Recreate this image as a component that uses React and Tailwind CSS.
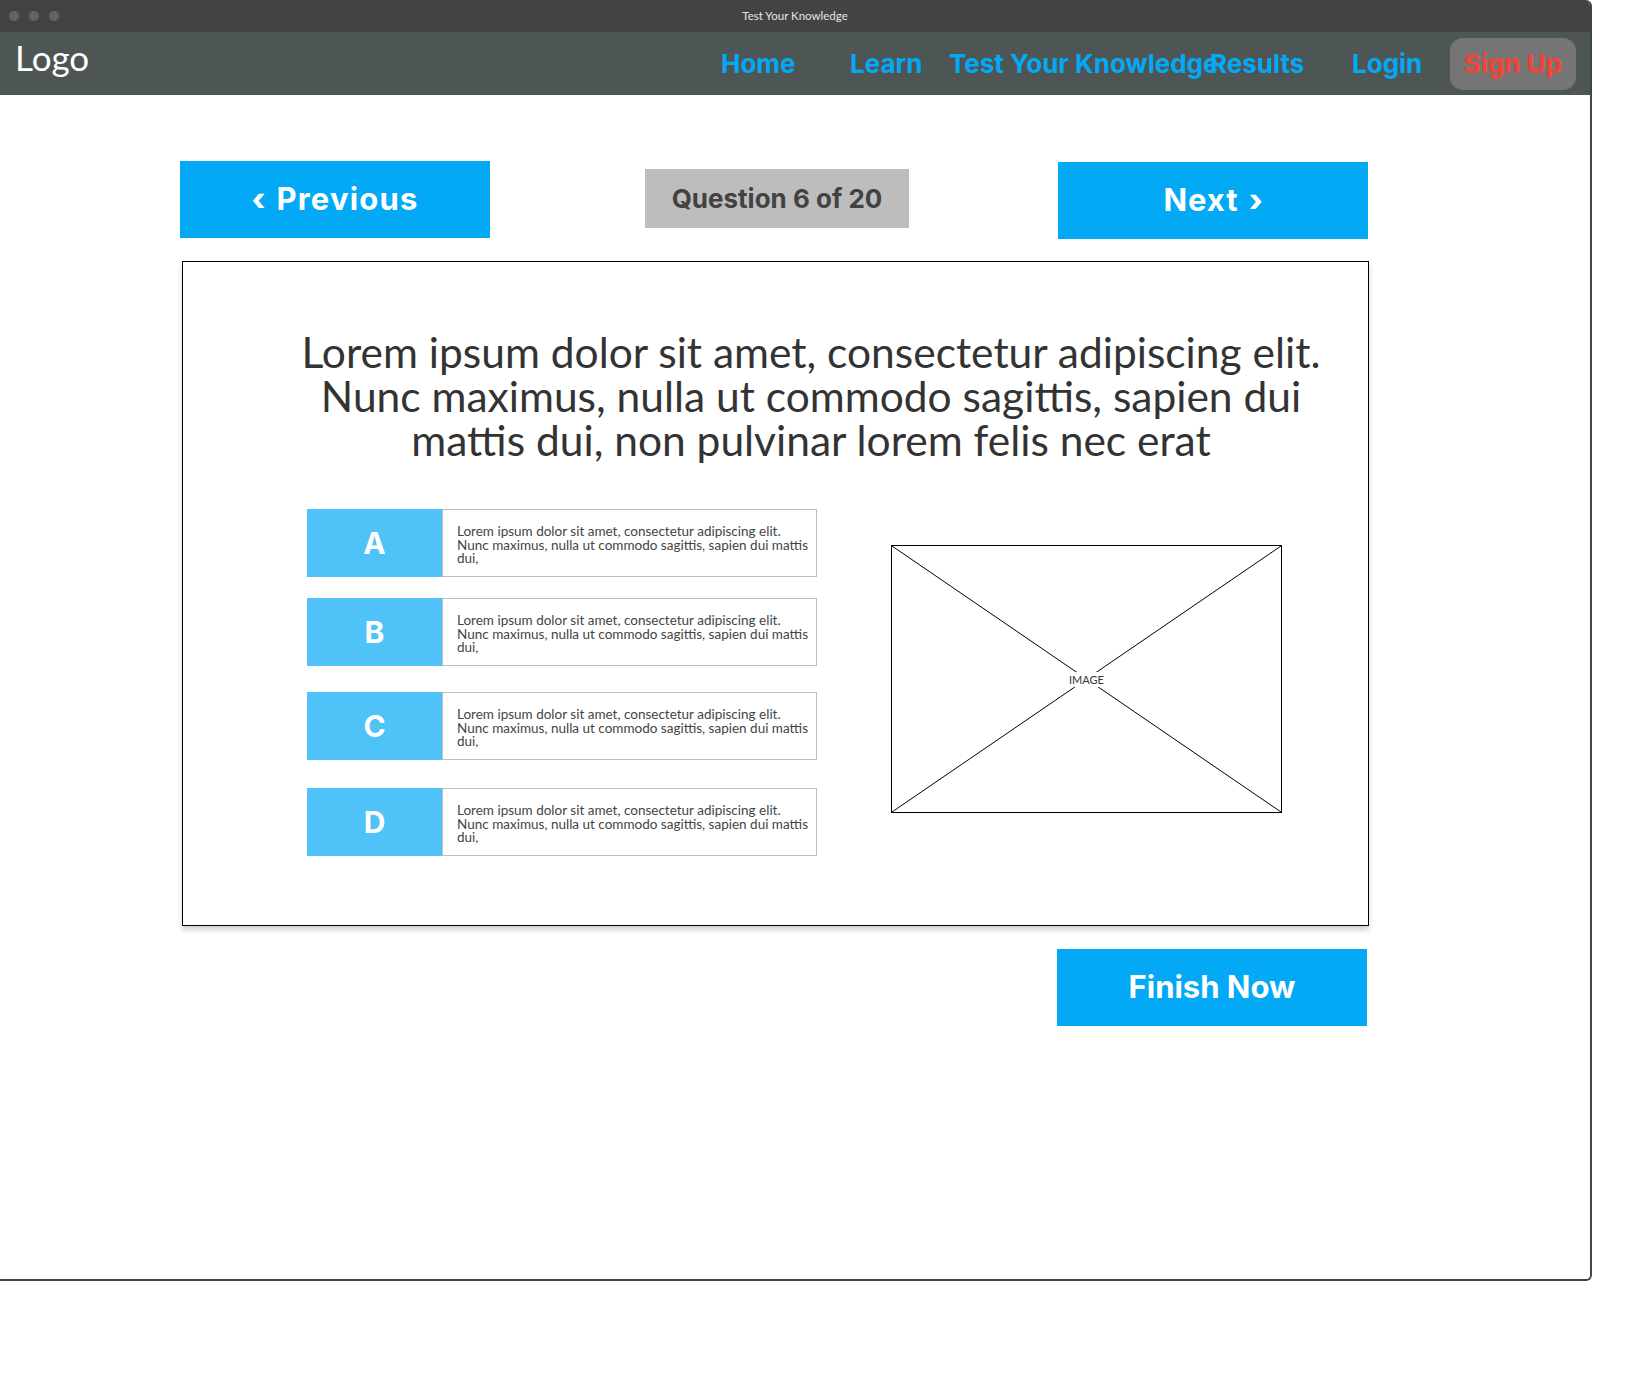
const navItems = [
  { label: 'Home', box: 'w-[129px]' },
  { label: 'Learn', box: 'w-[99px]' },
  { label: 'Test Your Knowledge', box: 'w-[261px]' },
  { label: 'Results', box: 'w-[142px]' },
  { label: 'Login', box: 'w-[98px]' },
];

const answers = [
  { letter: 'A', gap: 'mt-0' },
  { letter: 'B', gap: 'mt-[21px]' },
  { letter: 'C', gap: 'mt-[26px]' },
  { letter: 'D', gap: 'mt-[28px]' },
];

const TitleBar = () => (
  <div className="grid h-[32px] grid-cols-[1fr_auto_1fr] items-center bg-[#434343] pb-[1px]">
    <div className="flex gap-[10px] pl-[9px] pt-[1px]">
      <span className="h-[10px] w-[10px] rounded-full bg-[#646464]" />
      <span className="h-[10px] w-[10px] rounded-full bg-[#646464]" />
      <span className="h-[10px] w-[10px] rounded-full bg-[#646464]" />
    </div>
    <p className="text-[11.5px] text-[#e6e6e6]">Test Your Knowledge</p>
    <div />
  </div>
);

const NavBar = () => (
  <nav className="flex h-[63px] items-center bg-[#4d5654] pl-[15px] pr-[14px]">
    <span className="self-start mt-[8px] text-[35px] leading-none text-white">Logo</span>
    <div className="ml-auto flex items-center font-['Inter',sans-serif] text-[26px] font-bold leading-none">
      {navItems.map((item) => (
        <a key={item.label} className={`${item.box} whitespace-nowrap text-[#03a9f4]`}>
          {item.label}
        </a>
      ))}
      <a className="flex h-[52px] w-[126px] items-center justify-center rounded-[13px] bg-[#757575] text-[#f44336]">
        Sign Up
      </a>
    </div>
  </nav>
);

const AnswerRow = ({ letter, gap }) => (
  <div className={`flex h-[68px] ${gap}`}>
    <div className="flex w-[135px] items-center justify-center bg-[#4fc3f7] font-['Inter',sans-serif] text-[30px] font-bold text-white">
      {letter}
    </div>
    <div className="flex-1 border border-[#bdbdbd] bg-white pl-[14px] pt-[15px] text-[13.5px] leading-[13.6px] text-[#444]">
      Lorem ipsum dolor sit amet, consectetur adipiscing elit.
      <br />
      Nunc maximus, nulla ut commodo sagittis, sapien dui mattis
      <br />
      dui,
    </div>
  </div>
);

const ImagePlaceholder = () => (
  <div className="relative ml-[74px] mt-[36px] flex h-[268px] w-[391px] items-center justify-center border border-black">
    <svg className="absolute inset-0 h-full w-full" viewBox="0 0 100 100" preserveAspectRatio="none">
      <line x1="0" y1="0" x2="100" y2="100" stroke="#000" strokeWidth="1" vectorEffect="non-scaling-stroke" />
      <line x1="100" y1="0" x2="0" y2="100" stroke="#000" strokeWidth="1" vectorEffect="non-scaling-stroke" />
    </svg>
    <span className="relative bg-white px-[3px] py-[2px] text-[11px] leading-none text-[#333]">IMAGE</span>
  </div>
);

const BigButton = ({ children, className }) => (
  <button
    className={`flex h-[77px] w-[310px] items-center justify-center bg-[#03a9f4] font-['Inter',sans-serif] text-[31px] font-bold text-white ${className}`}
  >
    {children}
  </button>
);

export default function App() {
  return (
    <div className="min-h-[1389px] w-[1639px] bg-white font-['Lato',sans-serif]">
      <div className="flex h-[1281px] w-[1592px] flex-col overflow-hidden rounded-tr-[6px] rounded-br-[6px] border-r-2 border-b-2 border-[#444]">
        <TitleBar />
        <NavBar />

        <main className="ml-[180px] w-[1189px] pt-[66px]">
          <div className="flex items-start">
            <BigButton>
              <span className="font-extrabold">‹</span>
              <span className="ml-[11px] tracking-[1.2px]">Previous</span>
            </BigButton>
            <div className="ml-[155px] mt-[8px] flex h-[59px] w-[264px] items-center justify-center bg-[#bdbdbd] font-['Inter',sans-serif] text-[26px] font-bold text-[#424242]">
              Question 6 of 20
            </div>
            <BigButton className="ml-[149px] mt-[1px]">
              <span className="tracking-[1px]">Next</span>
              <span className="ml-[10px] font-extrabold">›</span>
            </BigButton>
          </div>

          <section className="ml-[2px] mt-[22px] h-[665px] w-[1187px] border border-black bg-white shadow-[0_4px_5px_rgba(0,0,0,0.18)]">
            <p className="ml-[108px] mt-[68px] w-[1040px] text-center text-[42.5px] leading-[44px] text-[#333]">
              Lorem ipsum dolor sit amet, consectetur adipiscing elit.
              <br />
              Nunc maximus, nulla ut commodo sagittis, sapien dui
              <br />
              mattis dui, non pulvinar lorem felis nec erat
            </p>

            <div className="mt-[47px] flex items-start">
              <div className="ml-[124px] w-[510px]">
                {answers.map((a) => (
                  <AnswerRow key={a.letter} {...a} />
                ))}
              </div>
              <ImagePlaceholder />
            </div>
          </section>

          <BigButton className="ml-[877px] mt-[23px]">Finish Now</BigButton>
        </main>
      </div>
    </div>
  );
}
